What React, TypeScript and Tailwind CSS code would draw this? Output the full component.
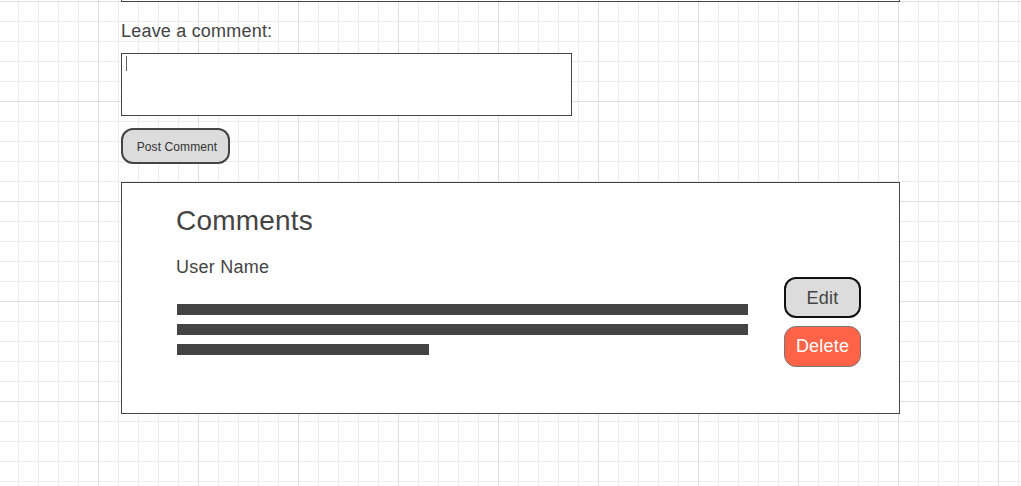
import React from 'react';

const gridBg =
  'bg-white bg-[linear-gradient(to_right,#dedede_1px,transparent_1px),linear-gradient(to_bottom,#dedede_1px,transparent_1px),linear-gradient(to_right,#ececec_1px,transparent_1px),linear-gradient(to_bottom,#ececec_1px,transparent_1px)] bg-size-[100px_100px,100px_100px,20px_20px,20px_20px] bg-position-[98px_1px]';

const CommentItem: React.FC<{ userName: string }> = ({ userName }) => (
  <div className="mt-[19px] flex">
    <div className="w-[608px] flex flex-col">
      <div className="text-[18px] leading-[22px] tracking-[0.25px] text-[#444]">{userName}</div>
      <div className="mt-[26px] ml-[1px] flex flex-col gap-[9px]">
        <div className="h-[11px] w-[571px] bg-[#444]" />
        <div className="h-[11px] w-[571px] bg-[#444]" />
        <div className="h-[11px] w-[252px] bg-[#444]" />
      </div>
    </div>
    <div className="mt-[21px] flex flex-col gap-[8px]">
      <button className="w-[77px] h-[41px] rounded-[12px] border-2 border-[#111] bg-[#dcdcdc] pt-[1px] text-[18px] tracking-[0.2px] text-[#444]">
        Edit
      </button>
      <button className="w-[77px] h-[41px] rounded-[12px] border border-[#777] bg-[#ff6347] text-[18px] tracking-[0.2px] text-white">
        Delete
      </button>
    </div>
  </div>
);

export default function App() {
  return (
    <div className={`min-h-screen w-full ${gridBg} font-['Liberation_Sans',Arial,sans-serif]`}>
      <div className="pl-[121px] w-[900px] flex flex-col">
        {/* bottom edge of the post above */}
        <div className="h-[2px] w-[779px] border-x border-b border-[#444] bg-white" />

        <label className="mt-[18px] text-[18px] leading-[22px] tracking-[0.2px] text-[#444]">Leave a comment:</label>
        <div className="mt-[11px] w-[451px] h-[63px] border border-[#444] bg-white pl-[4px] pt-[2px]">
          <div className="w-px h-[15px] bg-[#666]" />
        </div>

        <div className="mt-[12px]">
          <button className="h-[36px] w-[109px] rounded-[12px] border-2 border-[#444] bg-[#dcdcdc] pt-[2px] pl-[3px] text-[12px] tracking-[0.1px] text-[#333]">
            Post Comment
          </button>
        </div>

        <div className="mt-[18px] w-[779px] h-[232px] border border-[#444] bg-white pl-[54px] pt-[22px]">
          <h2 className="text-[28px] leading-[32px] tracking-[0.2px] text-[#444]">Comments</h2>
          <CommentItem userName="User Name" />
        </div>
      </div>
    </div>
  );
}
